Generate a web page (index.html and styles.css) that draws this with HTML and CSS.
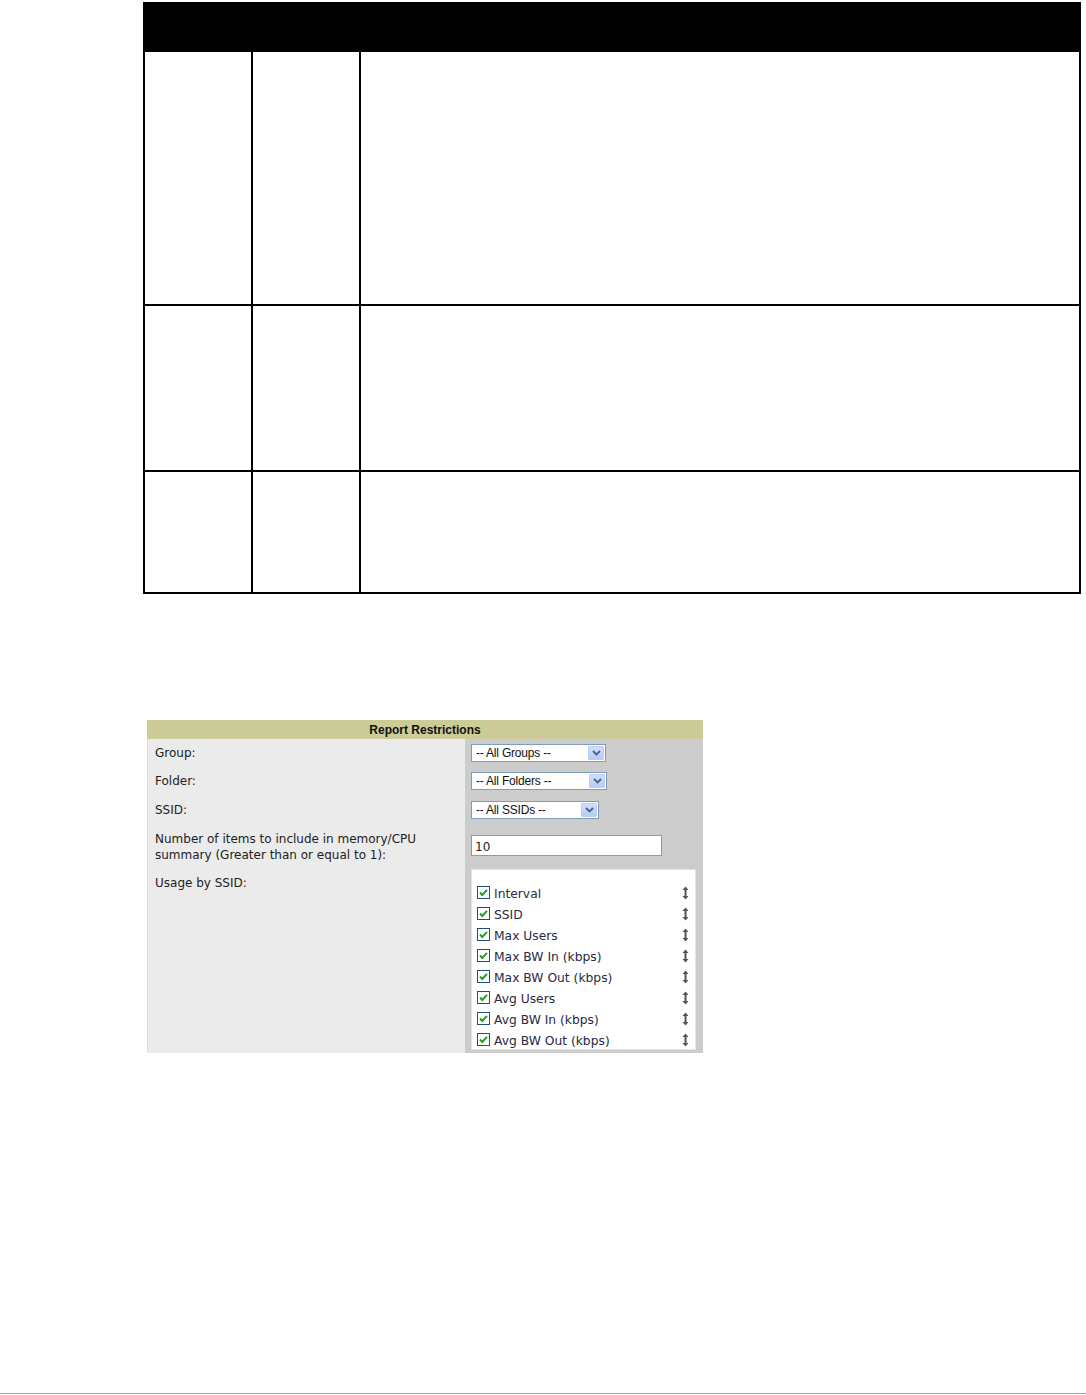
FILE: index.html
```html
<!DOCTYPE html>
<html lang="en">
<head>
<meta charset="utf-8">
<title>Report Restrictions</title>
<link rel="stylesheet" href="styles.css">
</head>
<body>
<div class="page">
  <div class="doc-table">
    <div class="doc-head"></div>
    <div class="doc-row r1"><div class="cell"></div><div class="cell"></div><div class="cell last"></div></div>
    <div class="doc-row r2"><div class="cell"></div><div class="cell"></div><div class="cell last"></div></div>
    <div class="doc-row r3"><div class="cell"></div><div class="cell"></div><div class="cell last"></div></div>
  </div>

  <div class="panel">
    <div class="panel-head">Report Restrictions</div>
    <div class="panel-grid">
      <div class="lbl row-a">Group:</div>
      <div class="ctl row-a">
        <div class="select w135"><span class="sel-text">-- All Groups --</span><span class="sel-btn"><svg width="9" height="6" viewBox="0 0 9 6"><path d="M1 1 L4.5 4.5 L8 1" fill="none" stroke="#4d6185" stroke-width="1.8"/></svg></span></div>
      </div>
      <div class="lbl row-b">Folder:</div>
      <div class="ctl row-b">
        <div class="select w136"><span class="sel-text">-- All Folders --</span><span class="sel-btn"><svg width="9" height="6" viewBox="0 0 9 6"><path d="M1 1 L4.5 4.5 L8 1" fill="none" stroke="#4d6185" stroke-width="1.8"/></svg></span></div>
      </div>
      <div class="lbl row-b">SSID:</div>
      <div class="ctl row-b">
        <div class="select w128"><span class="sel-text">-- All SSIDs --</span><span class="sel-btn"><svg width="9" height="6" viewBox="0 0 9 6"><path d="M1 1 L4.5 4.5 L8 1" fill="none" stroke="#4d6185" stroke-width="1.8"/></svg></span></div>
      </div>
      <div class="lbl row-c">Number of items to include in memory/CPU summary (Greater than or equal to 1):</div>
      <div class="ctl row-c">
        <div class="textbox">10</div>
      </div>
      <div class="lbl row-d">Usage by SSID:</div>
      <div class="ctl row-d">
        <div class="listbox">
          <div class="item"><span class="chk"><svg width="13" height="13" viewBox="0 0 13 13"><rect x="0.5" y="0.5" width="12" height="12" fill="#fff" stroke="#1c5180"/><path d="M3 6.5 L5.3 9 L10 3.8" fill="none" stroke="#21a121" stroke-width="2"/></svg></span><span class="item-text">Interval</span><span class="mv"><svg width="7" height="14" viewBox="0 0 7 14"><path d="M3.5 0.5 L6.5 4 H4.5 V10 H6.5 L3.5 13.5 L0.5 10 H2.5 V4 H0.5 Z" fill="#555"/></svg></span></div>
          <div class="item"><span class="chk"><svg width="13" height="13" viewBox="0 0 13 13"><rect x="0.5" y="0.5" width="12" height="12" fill="#fff" stroke="#1c5180"/><path d="M3 6.5 L5.3 9 L10 3.8" fill="none" stroke="#21a121" stroke-width="2"/></svg></span><span class="item-text">SSID</span><span class="mv"><svg width="7" height="14" viewBox="0 0 7 14"><path d="M3.5 0.5 L6.5 4 H4.5 V10 H6.5 L3.5 13.5 L0.5 10 H2.5 V4 H0.5 Z" fill="#555"/></svg></span></div>
          <div class="item"><span class="chk"><svg width="13" height="13" viewBox="0 0 13 13"><rect x="0.5" y="0.5" width="12" height="12" fill="#fff" stroke="#1c5180"/><path d="M3 6.5 L5.3 9 L10 3.8" fill="none" stroke="#21a121" stroke-width="2"/></svg></span><span class="item-text">Max Users</span><span class="mv"><svg width="7" height="14" viewBox="0 0 7 14"><path d="M3.5 0.5 L6.5 4 H4.5 V10 H6.5 L3.5 13.5 L0.5 10 H2.5 V4 H0.5 Z" fill="#555"/></svg></span></div>
          <div class="item"><span class="chk"><svg width="13" height="13" viewBox="0 0 13 13"><rect x="0.5" y="0.5" width="12" height="12" fill="#fff" stroke="#1c5180"/><path d="M3 6.5 L5.3 9 L10 3.8" fill="none" stroke="#21a121" stroke-width="2"/></svg></span><span class="item-text">Max BW In (kbps)</span><span class="mv"><svg width="7" height="14" viewBox="0 0 7 14"><path d="M3.5 0.5 L6.5 4 H4.5 V10 H6.5 L3.5 13.5 L0.5 10 H2.5 V4 H0.5 Z" fill="#555"/></svg></span></div>
          <div class="item"><span class="chk"><svg width="13" height="13" viewBox="0 0 13 13"><rect x="0.5" y="0.5" width="12" height="12" fill="#fff" stroke="#1c5180"/><path d="M3 6.5 L5.3 9 L10 3.8" fill="none" stroke="#21a121" stroke-width="2"/></svg></span><span class="item-text">Max BW Out (kbps)</span><span class="mv"><svg width="7" height="14" viewBox="0 0 7 14"><path d="M3.5 0.5 L6.5 4 H4.5 V10 H6.5 L3.5 13.5 L0.5 10 H2.5 V4 H0.5 Z" fill="#555"/></svg></span></div>
          <div class="item"><span class="chk"><svg width="13" height="13" viewBox="0 0 13 13"><rect x="0.5" y="0.5" width="12" height="12" fill="#fff" stroke="#1c5180"/><path d="M3 6.5 L5.3 9 L10 3.8" fill="none" stroke="#21a121" stroke-width="2"/></svg></span><span class="item-text">Avg Users</span><span class="mv"><svg width="7" height="14" viewBox="0 0 7 14"><path d="M3.5 0.5 L6.5 4 H4.5 V10 H6.5 L3.5 13.5 L0.5 10 H2.5 V4 H0.5 Z" fill="#555"/></svg></span></div>
          <div class="item"><span class="chk"><svg width="13" height="13" viewBox="0 0 13 13"><rect x="0.5" y="0.5" width="12" height="12" fill="#fff" stroke="#1c5180"/><path d="M3 6.5 L5.3 9 L10 3.8" fill="none" stroke="#21a121" stroke-width="2"/></svg></span><span class="item-text">Avg BW In (kbps)</span><span class="mv"><svg width="7" height="14" viewBox="0 0 7 14"><path d="M3.5 0.5 L6.5 4 H4.5 V10 H6.5 L3.5 13.5 L0.5 10 H2.5 V4 H0.5 Z" fill="#555"/></svg></span></div>
          <div class="item"><span class="chk"><svg width="13" height="13" viewBox="0 0 13 13"><rect x="0.5" y="0.5" width="12" height="12" fill="#fff" stroke="#1c5180"/><path d="M3 6.5 L5.3 9 L10 3.8" fill="none" stroke="#21a121" stroke-width="2"/></svg></span><span class="item-text">Avg BW Out (kbps)</span><span class="mv"><svg width="7" height="14" viewBox="0 0 7 14"><path d="M3.5 0.5 L6.5 4 H4.5 V10 H6.5 L3.5 13.5 L0.5 10 H2.5 V4 H0.5 Z" fill="#555"/></svg></span></div>
        </div>
      </div>
    </div>
  </div>

  <div class="footer-line"></div>
</div>
</body>
</html>
```
FILE: styles.css
```css
* { box-sizing: border-box; }
html, body { margin: 0; padding: 0; background: #fff; }
body { font-family: "DejaVu Sans", Verdana, sans-serif; color: #222; }

.page {
  height: 1395px;
  display: flex;
  flex-direction: column;
  overflow: hidden;
}

/* document table */
.doc-table {
  margin-top: 2px;
  margin-left: 143px;
  width: 938px;
}
.doc-head { height: 50px; background: #000; }
.doc-row {
  display: grid;
  grid-template-columns: 108px 108px 1fr;
  border-left: 2px solid #000;
  border-right: 2px solid #000;
  border-bottom: 2px solid #000;
}
.doc-row.r1 { height: 254px; }
.doc-row.r2 { height: 166px; }
.doc-row.r3 { height: 122px; }
.cell { border-right: 2px solid #000; }
.cell.last { border-right: none; }

/* report restrictions panel */
.panel {
  margin-top: 126px;
  margin-left: 147px;
  width: 556px;
}
.panel-head {
  height: 19px;
  background: #cccc99;
  text-align: center;
  font-family: "Liberation Sans", Arial, sans-serif;
  font-weight: bold;
  font-size: 12px;
  line-height: 20px;
  color: #111;
}
.panel-grid {
  display: grid;
  grid-template-columns: 318px 238px;
}
.lbl {
  background: #ebebeb;
  border-left: 1px solid #dedede;
  padding: 6px 8px 0 7px;
  font-size: 12px;
  line-height: 16px;
  color: #222;
}
.ctl {
  background: #cccccc;
  padding: 5px 0 0 6px;
}
.row-a { height: 28px; }
.row-b { height: 29px; }
.row-c { height: 39px; }
.ctl.row-c { padding-top: 10px; }
.row-d { height: 189px; }
.lbl.row-d { padding-top: 11px; }

.select {
  height: 18px;
  background: #fff;
  border: 1px solid #7f9db9;
  display: flex;
  align-items: center;
  justify-content: space-between;
  padding: 0 1px 0 4px;
}
.w135 { width: 135px; }
.w136 { width: 136px; }
.w128 { width: 128px; }
.sel-text {
  font-family: "Liberation Sans", Arial, sans-serif;
  font-size: 12px;
  color: #111;
  line-height: 16px;
  letter-spacing: -0.2px;
}
.sel-btn {
  width: 16px;
  height: 14px;
  background: linear-gradient(#d3defd, #b7cbf7);
  border: 1px solid #bccdf5;
  border-radius: 1px;
  display: flex;
  align-items: center;
  justify-content: center;
}

.textbox {
  width: 191px;
  height: 21px;
  background: #fff;
  border: 1px solid #7f9db9;
  font-size: 12px;
  line-height: 22px;
  padding-left: 3px;
  color: #222;
}

.listbox {
  width: 225px;
  height: 181px;
  background: #fff;
  border: 1px solid #e4e4e4;
  padding: 12px 6px 0 5px;
}
.item {
  height: 21px;
  display: flex;
  align-items: center;
}
.chk { width: 13px; height: 13px; display: flex; margin-right: 4px; }
.item-text {
  flex: 1;
  font-size: 12.3px;
  color: #2a2a44;
  line-height: 16px;
  padding-top: 3px;
}
.mv { width: 7px; height: 14px; display: flex; }

.footer-line {
  margin-top: auto;
  height: 1px;
  margin-bottom: 1px;
  background: #a3a3a3;
}
```
